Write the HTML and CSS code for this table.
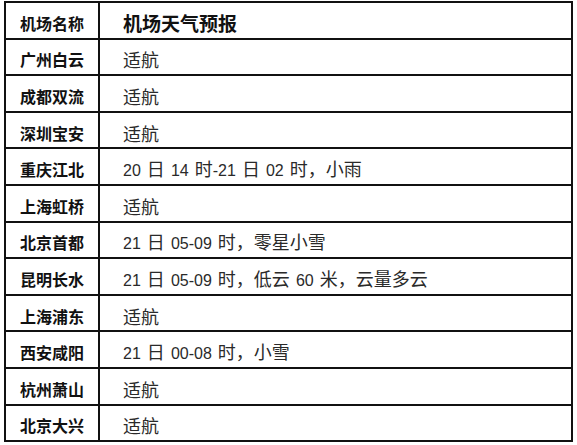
FILE: index.html
```html
<!DOCTYPE html>
<html lang="zh-CN">
<head>
<meta charset="utf-8">
<title>机场天气预报</title>
<link rel="stylesheet" href="styles.css">
</head>
<body>
<table class="wx">
  <thead>
    <tr><th class="name">机场名称</th><th class="fc head">机场天气预报</th></tr>
  </thead>
  <tbody>
    <tr><td class="name">广州白云</td><td class="fc">适航</td></tr>
    <tr><td class="name">成都双流</td><td class="fc">适航</td></tr>
    <tr><td class="name">深圳宝安</td><td class="fc">适航</td></tr>
    <tr><td class="name">重庆江北</td><td class="fc"><span class="n">20</span> 日 <span class="n">14</span> 时<span class="n">-21</span> 日 <span class="n">02</span> 时，小雨</td></tr>
    <tr><td class="name">上海虹桥</td><td class="fc">适航</td></tr>
    <tr><td class="name">北京首都</td><td class="fc"><span class="n">21</span> 日 <span class="n">05-09</span> 时，零星小雪</td></tr>
    <tr><td class="name">昆明长水</td><td class="fc"><span class="n">21</span> 日 <span class="n">05-09</span> 时，低云 <span class="n">60</span> 米，云量多云</td></tr>
    <tr><td class="name">上海浦东</td><td class="fc">适航</td></tr>
    <tr><td class="name">西安咸阳</td><td class="fc"><span class="n">21</span> 日 <span class="n">00-08</span> 时，小雪</td></tr>
    <tr><td class="name">杭州萧山</td><td class="fc">适航</td></tr>
    <tr><td class="name">北京大兴</td><td class="fc">适航</td></tr>
  </tbody>
</table>
</body>
</html>
```
FILE: styles.css
```css
html, body {
  margin: 0;
  padding: 0;
  background: #fff;
}
body {
  padding: 1px 0 0 4px;
  font-family: "Noto Sans CJK SC", "Liberation Sans", sans-serif;
  color: #111;
}
.wx {
  border-collapse: collapse;
  width: 569px;
  table-layout: fixed;
}
.wx th, .wx td {
  border: 2px solid #111;
  height: 29.6px;
  padding: 5px 0 0 0;
  vertical-align: middle;
  text-align: left;
  line-height: 1;
  white-space: nowrap;
}
.wx .name {
  width: 78px;
  padding-left: 14px;
  font-size: 16px;
  font-weight: 700;
  color: #111;
}
.wx .fc {
  padding-left: 23px;
  font-size: 18px;
  font-weight: 400;
  color: #2a2a2a;
  word-spacing: 2px;
}
.wx .fc.head {
  font-size: 19px;
  font-weight: 700;
  color: #111;
}
.n {
  font-family: "Liberation Sans", sans-serif;
  font-size: 16px;
}
```
